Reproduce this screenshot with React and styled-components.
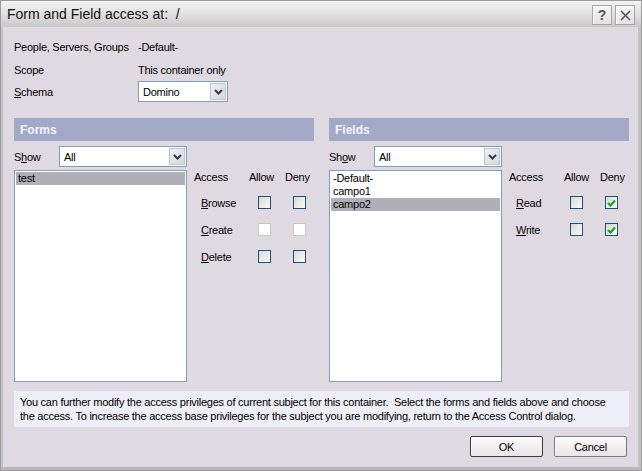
import React from "react";
import styled, { createGlobalStyle } from "styled-components";

const GlobalStyle = createGlobalStyle`
  html, body { margin: 0; padding: 0; background: #ffffff; }
  body {
    font-family: "Liberation Sans", Arial, sans-serif;
    font-size: 11px;
    letter-spacing: -0.25px;
    color: #000;
  }
  * { box-sizing: border-box; }
`;

const Window = styled.div`
  width: 642px;
  height: 471px;
  display: flex;
  flex-direction: column;
  border: 1px solid #9c9c9c;
  background: #dfdae2;
`;

const TitleBar = styled.div`
  height: 26px;
  flex: none;
  display: flex;
  align-items: center;
  justify-content: space-between;
  padding: 0 6px 0 6px;
  background: linear-gradient(#f4f4f4, #dedede 55%, #c8c8c8);
`;

const Title = styled.div`
  font-size: 14px;
  letter-spacing: 0;
  color: #111;
`;

const TitleButtons = styled.div`
  display: flex;
  gap: 3px;
  margin-top: 2px;
`;

const TitleButton = styled.div`
  width: 20px;
  height: 20px;
  display: flex;
  align-items: center;
  justify-content: center;
  border: 1px solid #a4a4a4;
  box-shadow: inset 1px 1px 0 #ffffff;
  background: linear-gradient(#f6f6f6, #e2e2e2);
  color: #555;
  font-size: 14px;
  font-weight: bold;
`;

const Body = styled.div`
  flex: 1;
  display: flex;
  flex-direction: column;
  border-left: 2px solid #c2c2c2;
  border-right: 3px solid #c2c2c2;
  border-bottom: 3px solid #b8b8b8;
  padding: 8px 9px 0 11px;
`;

const InfoGrid = styled.div`
  display: grid;
  grid-template-columns: 124px auto;
  grid-template-rows: 23px 23px 21px;
  align-items: center;
`;

const Panels = styled.div`
  display: grid;
  grid-template-columns: 300px 300px;
  column-gap: 15px;
  margin-top: 16px;
`;

const Panel = styled.div`
  display: flex;
  flex-direction: column;
`;

const PanelHeader = styled.div`
  height: 23px;
  display: flex;
  align-items: center;
  padding-left: 6px;
  background: #a1a9c7;
  color: #f4f4fa;
  font-weight: bold;
  font-size: 12px;
  letter-spacing: 0;
`;

const ShowRow = styled.div`
  display: flex;
  align-items: center;
  height: 21px;
  margin-top: 5px;
`;

const ShowLabel = styled.div`
  width: 45px;
`;

const SelectBox = styled.div`
  width: ${(p) => p.$width}px;
  height: 21px;
  display: flex;
  align-items: center;
  justify-content: space-between;
  background: #fff;
  border: 1px solid #7f9db9;
  padding: 1px 1px 1px 4px;
`;

const SelectButton = styled.div`
  width: 16px;
  height: 17px;
  display: flex;
  align-items: center;
  justify-content: center;
  border: 1px solid #b9c3d4;
  background: linear-gradient(135deg, #eef0f4, #d4d8e0);
`;

const ListRow = styled.div`
  display: flex;
  gap: 7px;
  margin-top: 3px;
`;

const ListBox = styled.div`
  width: 173px;
  height: 212px;
  background: #fff;
  border: 1px solid #7f9db9;
  padding: 1px 1px;
`;

const ListItem = styled.div`
  height: 13px;
  line-height: 13px;
  padding-left: 2px;
  background: ${(p) => (p.$selected ? "#b0afb8" : "transparent")};
`;

const AccessGrid = styled.div`
  display: grid;
  grid-template-columns: 55px 36px 1fr;
  grid-template-rows: 19px;
  grid-auto-rows: 27px;
  align-items: center;
  height: fit-content;
`;

const HeadCell = styled.div`
  align-self: start;
  line-height: 14px;
`;

const RowLabel = styled.div`
  padding-left: 7px;
`;

const CheckCell = styled.div`
  display: flex;
  padding-left: ${(p) => p.$inset}px;
`;

const CheckBox = styled.div`
  width: 13px;
  height: 13px;
  display: flex;
  align-items: center;
  justify-content: center;
  border: 1px solid ${(p) => (p.$disabled ? "#cac8bb" : "#1c5180")};
  background: ${(p) =>
    p.$disabled ? "#ffffff" : "linear-gradient(135deg, #d8d8d2, #fbfbfb)"};
`;

const Note = styled.div`
  margin-top: 9px;
  height: 36px;
  padding: 4px 6px;
  line-height: 14px;
  white-space: nowrap;
  background: #eeeef6;
  width: 615px;
`;

const ButtonRow = styled.div`
  display: flex;
  justify-content: flex-end;
  gap: 11px;
  margin-top: 9px;
  padding-right: 2px;
`;

const Button = styled.button`
  width: 73px;
  height: 21px;
  font-family: inherit;
  font-size: 11px;
  letter-spacing: inherit;
  color: #000;
  border-radius: 2px;
  border: 1px solid ${(p) => (p.$default ? "#3c3c3c" : "#7a7a7a")};
  box-shadow: inset 1px 1px 0 #fff;
  background: linear-gradient(#fbfbfb, #e6e6e6);
  padding: 0;
`;

const Key = styled.span`
  text-decoration: underline;
`;

function Chevron() {
  return (
    <svg width="9" height="6" viewBox="0 0 9 6">
      <polyline points="1,1 4.5,4.5 8,1" fill="none" stroke="#3a3a3a" strokeWidth="2" />
    </svg>
  );
}

function Select({ width, value }) {
  return (
    <SelectBox $width={width}>
      <span>{value}</span>
      <SelectButton>
        <Chevron />
      </SelectButton>
    </SelectBox>
  );
}

function Check({ checked, disabled }) {
  return (
    <CheckBox $disabled={disabled}>
      {checked && (
        <svg width="9" height="8" viewBox="0 0 9 8">
          <polyline points="1,4 3.5,6.5 8,1.5" fill="none" stroke="#21a121" strokeWidth="2.2" />
        </svg>
      )}
    </CheckBox>
  );
}

function AccessPanel({ title, showKey, items, rights, inset }) {
  return (
    <Panel>
      <PanelHeader>{title}</PanelHeader>
      <ShowRow>
        <ShowLabel>{showKey}</ShowLabel>
        <Select width={128} value="All" />
      </ShowRow>
      <ListRow>
        <ListBox>
          {items.map((it) => (
            <ListItem key={it.name} $selected={it.selected}>
              {it.name}
            </ListItem>
          ))}
        </ListBox>
        <AccessGrid>
          <HeadCell>Access</HeadCell>
          <HeadCell>Allow</HeadCell>
          <HeadCell>Deny</HeadCell>
          {rights.map((r) => (
            <React.Fragment key={r.rest}>
              <RowLabel>
                <Key>{r.key}</Key>
                {r.rest}
              </RowLabel>
              <CheckCell $inset={inset[0]}>
                <Check disabled={r.disabled} checked={r.allow} />
              </CheckCell>
              <CheckCell $inset={inset[1]}>
                <Check disabled={r.disabled} checked={r.deny} />
              </CheckCell>
            </React.Fragment>
          ))}
        </AccessGrid>
      </ListRow>
    </Panel>
  );
}

export default function App() {
  return (
    <>
      <GlobalStyle />
      <Window>
        <TitleBar>
          <Title>Form and Field access at:&nbsp; /</Title>
          <TitleButtons>
            <TitleButton>?</TitleButton>
            <TitleButton>
              <svg width="11" height="11" viewBox="0 0 11 11">
                <path d="M1 1 L10 10 M10 1 L1 10" stroke="#555" strokeWidth="1.6" />
              </svg>
            </TitleButton>
          </TitleButtons>
        </TitleBar>
        <Body>
          <InfoGrid>
            <div>People, Servers, Groups</div>
            <div>-Default-</div>
            <div>Scope</div>
            <div>This container only</div>
            <div>
              <Key>S</Key>chema
            </div>
            <Select width={90} value="Domino" />
          </InfoGrid>
          <Panels>
            <AccessPanel
              title="Forms"
              showKey={<>S<Key>h</Key>ow</>}
              inset={[9, 8]}
              items={[{ name: "test", selected: true }]}
              rights={[
                { key: "B", rest: "rowse" },
                { key: "C", rest: "reate", disabled: true },
                { key: "D", rest: "elete" },
              ]}
            />
            <AccessPanel
              title="Fields"
              showKey={<>Sh<Key>o</Key>w</>}
              inset={[6, 5]}
              items={[
                { name: "-Default-" },
                { name: "campo1" },
                { name: "campo2", selected: true },
              ]}
              rights={[
                { key: "R", rest: "ead", deny: true },
                { key: "W", rest: "rite", deny: true },
              ]}
            />
          </Panels>
          <Note>
            You can further modify the access privileges of current subject for this container.&nbsp; Select the forms and fields above and choose
            <br />
            the access. To increase the access base privileges for the subject you are modifying, return to the Access Control dialog.
          </Note>
          <ButtonRow>
            <Button $default>OK</Button>
            <Button>Cancel</Button>
          </ButtonRow>
        </Body>
      </Window>
    </>
  );
}
